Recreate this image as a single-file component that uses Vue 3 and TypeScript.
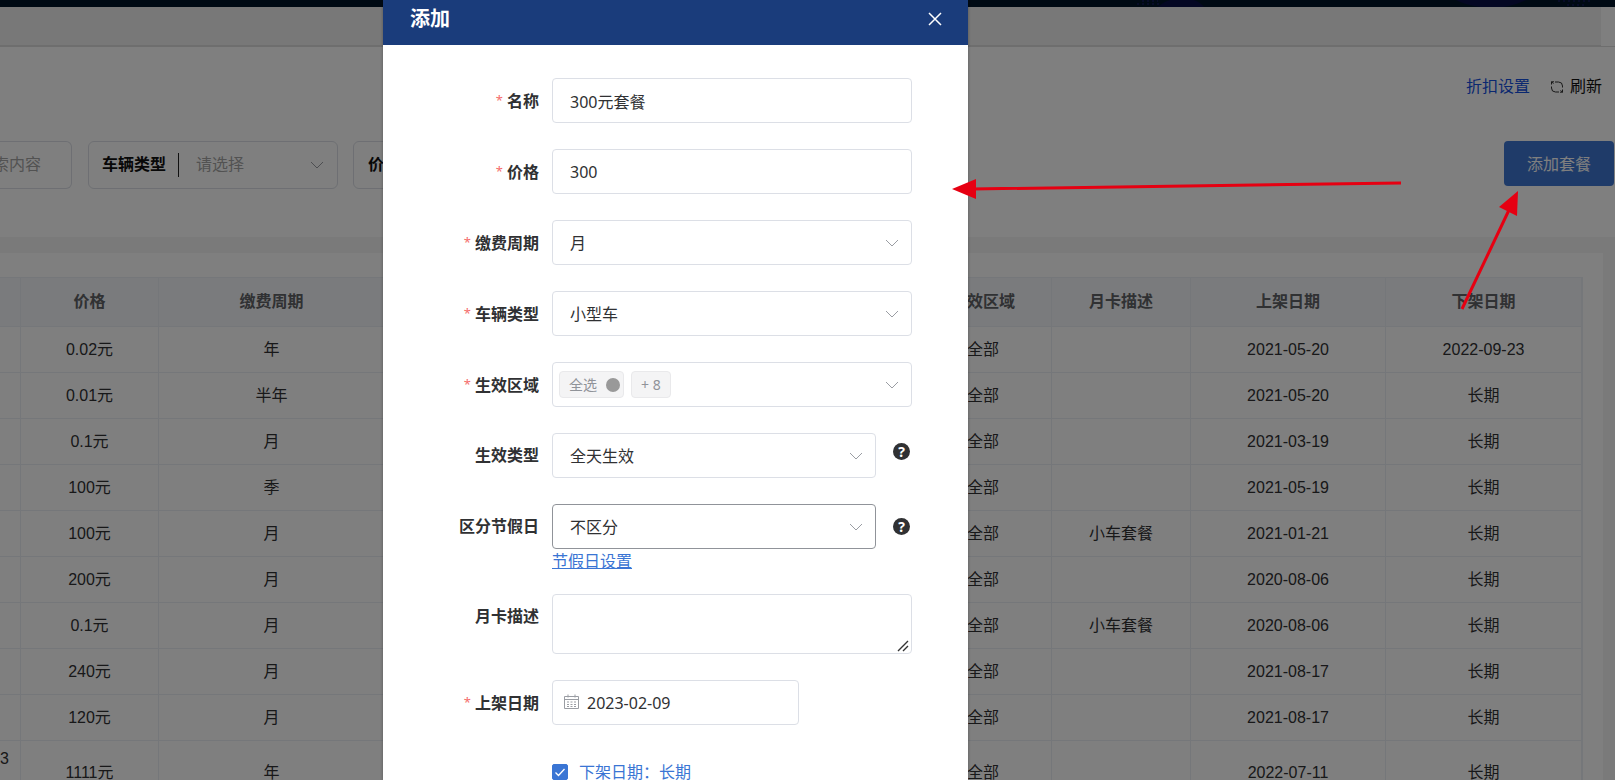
<script setup lang="ts">
import { reactive } from 'vue'

interface Plan {
  name: string
  price: string
  cycle: string
  area: string
  remark: string
  start: string
  end: string
}

const headers = ['', '价格', '缴费周期', '', '生效区域', '月卡描述', '上架日期', '下架日期']

const plan = (price: string, cycle: string, start: string, end = '长期', remark = '', name = ''): Plan => ({
  name,
  price,
  cycle,
  area: '全部',
  remark,
  start,
  end,
})

const plans: Plan[] = [
  plan('0.02元', '年', '2021-05-20', '2022-09-23'),
  plan('0.01元', '半年', '2021-05-20'),
  plan('0.1元', '月', '2021-03-19'),
  plan('100元', '季', '2021-05-19'),
  plan('100元', '月', '2021-01-21', '长期', '小车套餐'),
  plan('200元', '月', '2020-08-06'),
  plan('0.1元', '月', '2020-08-06', '长期', '小车套餐'),
  plan('240元', '月', '2021-08-17'),
  plan('120元', '月', '2021-08-17'),
  plan('1111元', '年', '2022-07-11', '长期', '', '3'),
]

const form = reactive({
  name: '300元套餐',
  price: '300',
  cycle: '月',
  carType: '小型车',
  effectType: '全天生效',
  holiday: '不区分',
  remark: '',
  startDate: '2023-02-09',
  longTerm: true,
})
</script>

<template>
  <div class="app">
    <div class="page">
      <header class="topbar">
        <svg class="topbar-art" viewBox="0 0 495 7" aria-hidden="true">
          <path d="M38 7Q43 2 50 0H74Q80 2 84 7Z" />
          <path d="M336 0H406Q396 5 384 7H360Q345 5 336 0Z" />
          <g class="dots">
            <path d="M22 1H38M17 4H40M438 1H472M447 5H464" />
          </g>
        </svg>
      </header>
      <nav class="tabs"><div class="tabs-track"></div></nav>

      <section class="tools">
        <div class="actions">
          <a class="discount" href="#">折扣设置</a>
          <button class="refresh" type="button">
            <svg viewBox="0 0 14 14" aria-hidden="true">
              <path d="M5 2H8.5A4 4 0 0 1 12.5 6V7.5M9 12H5.5A4 4 0 0 1 1.5 8V6.5M1.5 4.5V1.8H4M12.5 9.5V12.2H10M1.5 1.8L3.5 3.5M12.5 12.2L10.5 10.5" />
            </svg>
            刷新
          </button>
        </div>
        <div class="filters">
          <input class="filter search" type="text" placeholder="索内容" aria-label="索内容" />
          <div class="filter type-filter">
            <label for="filter-type">车辆类型</label>
            <select id="filter-type"><option>请选择</option></select>
            <svg class="chevron" viewBox="0 0 14 14" aria-hidden="true"><path d="M1 4L7 10L13 4" /></svg>
          </div>
          <div class="filter price-filter"><span>价</span></div>
          <button class="add" type="button">添加套餐</button>
        </div>
      </section>

      <section class="list">
        <table>
          <colgroup>
            <col class="c-name" /><col class="c-price" /><col class="c-cycle" /><col />
            <col class="c-area" /><col class="c-remark" /><col class="c-start" /><col class="c-end" />
          </colgroup>
          <thead>
            <tr><th v-for="(h, i) in headers" :key="i">{{ h }}</th></tr>
          </thead>
          <tbody>
            <tr v-for="(p, i) in plans" :key="i" :class="{ tall: p.name }">
              <td class="name">{{ p.name }}</td>
              <td>{{ p.price }}</td>
              <td>{{ p.cycle }}</td>
              <td></td>
              <td>{{ p.area }}</td>
              <td>{{ p.remark }}</td>
              <td>{{ p.start }}</td>
              <td>{{ p.end }}</td>
            </tr>
          </tbody>
        </table>
      </section>
    </div>

    <div class="overlay">
      <div class="dialog" role="dialog" aria-labelledby="dialog-title">
        <header class="dialog-head">
          <h2 id="dialog-title">添加</h2>
          <button type="button" aria-label="关闭">
            <svg viewBox="0 0 14 14" aria-hidden="true"><path d="M1 1L13 13M13 1L1 13" /></svg>
          </button>
        </header>

        <form class="form" @submit.prevent>
          <div class="row">
            <label class="required" for="f-name">名称</label>
            <input id="f-name" v-model="form.name" class="control" type="text" />
          </div>
          <div class="row">
            <label class="required" for="f-price">价格</label>
            <input id="f-price" v-model="form.price" class="control" type="text" />
          </div>
          <div class="row">
            <label class="required" for="f-cycle">缴费周期</label>
            <div class="select">
              <select id="f-cycle" v-model="form.cycle" class="control"><option>月</option></select>
              <svg class="chevron" viewBox="0 0 14 14" aria-hidden="true"><path d="M1 4L7 10L13 4" /></svg>
            </div>
          </div>
          <div class="row">
            <label class="required" for="f-car">车辆类型</label>
            <div class="select">
              <select id="f-car" v-model="form.carType" class="control"><option>小型车</option></select>
              <svg class="chevron" viewBox="0 0 14 14" aria-hidden="true"><path d="M1 4L7 10L13 4" /></svg>
            </div>
          </div>
          <div class="row">
            <label class="required" for="f-area">生效区域</label>
            <button id="f-area" type="button" class="control tags">
              <span class="tag">全选<i class="dot"></i></span>
              <span class="tag">+ 8</span>
              <svg class="chevron" viewBox="0 0 14 14" aria-hidden="true"><path d="M1 4L7 10L13 4" /></svg>
            </button>
          </div>
          <div class="row">
            <label for="f-effect">生效类型</label>
            <div class="select">
              <select id="f-effect" v-model="form.effectType" class="control"><option>全天生效</option></select>
              <svg class="chevron" viewBox="0 0 14 14" aria-hidden="true"><path d="M1 4L7 10L13 4" /></svg>
            </div>
            <span class="help">?</span>
          </div>
          <div class="row holiday">
            <label for="f-holiday">区分节假日</label>
            <div class="select">
              <select id="f-holiday" v-model="form.holiday" class="control hover"><option>不区分</option></select>
              <svg class="chevron" viewBox="0 0 14 14" aria-hidden="true"><path d="M1 4L7 10L13 4" /></svg>
            </div>
            <span class="help">?</span>
          </div>
          <a class="holiday-link" href="#">节假日设置</a>
          <div class="row">
            <label for="f-remark">月卡描述</label>
            <div class="area">
              <textarea id="f-remark" v-model="form.remark" class="control"></textarea>
              <svg class="grip" viewBox="0 0 12 12" aria-hidden="true"><path d="M1 11L11 1M6 11L11 6" /></svg>
            </div>
          </div>
          <div class="row">
            <label class="required" for="f-start">上架日期</label>
            <div class="date">
              <svg viewBox="0 0 15 15" aria-hidden="true">
                <path d="M.5 2.5H14.5V14.5H.5ZM.5 5.5H14.5M4 .5V3.5M11 .5V3.5M3 8H5M6.5 8H8.5M10 8H12M3 10.5H5M6.5 10.5H8.5M10 10.5H12M3 12.5H5M6.5 12.5H8.5M10 12.5H12" />
              </svg>
              <input id="f-start" v-model="form.startDate" class="control" type="text" />
            </div>
          </div>
          <label class="long-term">
            <span class="check">
              <input v-model="form.longTerm" type="checkbox" />
              <svg v-if="form.longTerm" viewBox="0 0 16 16" aria-hidden="true"><path d="M3.5 8.5L6.5 11.5L12.5 5" /></svg>
            </span>
            <span>下架日期：长期</span>
          </label>
        </form>
      </div>
    </div>

    <svg class="arrows" viewBox="0 0 1615 780" aria-hidden="true">
      <path class="line" d="M1401 183L972 189M1462 309L1509 210" />
      <path class="tip" d="M952 189L976 179V199Z" />
      <path class="tip" d="M1518 191L1517 216L1499 207Z" />
    </svg>
  </div>
</template>

<style>
body {
  margin: 0;
}
</style>

<style scoped>
* {
  box-sizing: border-box;
}

.app {
  position: relative;
  height: 100vh;
  overflow: hidden;
  font: 16px/24px "Noto Sans", "Noto Sans CJK SC", sans-serif;
  color: #303133;
}

input,
select,
textarea,
button {
  margin: 0;
  font: inherit;
  color: inherit;
}

select {
  appearance: none;
}

button {
  border: 0;
  padding: 0;
  background: none;
}

.page {
  min-height: 100%;
  background: #f5f5f5;
  font-family: "Liberation Sans", "Noto Sans CJK SC", sans-serif;
}

.topbar {
  display: flex;
  justify-content: flex-end;
  height: 7px;
  background: #001529;
}

.topbar-art {
  width: 495px;
  height: 7px;
  fill: #080e46;
}

.dots {
  stroke: #0e1850;
  stroke-width: 2;
  stroke-dasharray: 2 3;
}

.tabs {
  padding-right: 14px;
  border-bottom: 1px solid #dcdcdc;
  background: #fff;
}

.tabs-track {
  height: 39px;
  border-bottom: 1px solid #dcdcdc;
  background: #f0f0f0;
}

.tools {
  height: 190px;
  padding-top: 28px;
  background: #fff;
}

.actions {
  display: flex;
  justify-content: flex-end;
  align-items: center;
  gap: 20px;
  padding-right: 13px;
}

.discount {
  color: #1450e0;
  text-decoration: none;
}

.refresh {
  display: flex;
  align-items: center;
  gap: 6px;
  color: #111;
}

.refresh svg {
  width: 14px;
  height: 14px;
  fill: none;
  stroke: #333;
}

.filters {
  display: flex;
  align-items: flex-start;
  margin-top: 42px;
  padding-right: 1px;
}

.filter {
  display: flex;
  align-items: center;
  height: 48px;
  border: 1px solid #dcdfe6;
  border-radius: 6px;
  background: #fff;
}

.search {
  width: 72px;
  padding: 0;
  border-left: 0;
  border-radius: 0 6px 6px 0;
  text-indent: -7px;
  outline: none;
}

.search::placeholder {
  color: #a4a4a4;
}

.type-filter {
  width: 250px;
  margin-left: 16px;
  padding: 0 13px;
}

.type-filter label {
  padding-right: 12px;
  border-right: 1px solid #222;
  font-weight: 700;
  color: #111;
}

.type-filter select {
  flex: 1;
  min-width: 0;
  padding: 0 0 0 17px;
  border: 0;
  background: none;
  color: #a4a4a4;
}

.price-filter {
  width: 250px;
  margin-left: 15px;
  padding: 0 14px;
  font-weight: 700;
  color: #111;
}

.chevron {
  flex: none;
  width: 14px;
  height: 14px;
  fill: none;
  stroke: #9a9da3;
}

.add {
  width: 110px;
  height: 45px;
  margin-left: auto;
  padding-top: 2px;
  border-radius: 4px;
  background: #3e76d2;
  color: #fff;
}

.list {
  margin: 16px 12px 0 0;
  padding: 24px 20px 24px 0;
  background: #fff;
}

table {
  width: 100%;
  table-layout: fixed;
  border-spacing: 0;
  border-top: 1px solid #ebeef5;
  border-right: 1px solid #ebeef5;
}

.c-name {
  width: 21px;
}

.c-price {
  width: 138px;
}

.c-cycle {
  width: 226px;
}

.c-area {
  width: 137px;
}

.c-remark {
  width: 139px;
}

.c-start {
  width: 195px;
}

.c-end {
  width: 196px;
}

th,
td {
  height: 46px;
  padding: 0;
  border-right: 1px solid #ebeef5;
  border-bottom: 1px solid #ebeef5;
  text-align: center;
}

th {
  height: 49px;
  background: #f5f7fa;
  color: #606266;
}

.tall td {
  height: 64px;
}

.tall .name {
  padding: 6px 15px 0 0;
  text-align: right;
  vertical-align: top;
}

.overlay {
  position: absolute;
  inset: 0;
  display: flex;
  justify-content: center;
  padding-right: 264px;
  background: rgba(0, 0, 0, 0.5);
}

.dialog {
  width: 585px;
  background: #fff;
  box-shadow: 0 1px 3px rgba(0, 0, 0, 0.3);
}

.dialog-head {
  display: flex;
  justify-content: space-between;
  align-items: center;
  height: 45px;
  padding: 0 26px 8px 27px;
  background: #1a3c7b;
  color: #fff;
}

.dialog-head h2 {
  margin: 0;
  font-size: 20px;
}

.dialog-head svg {
  display: block;
  width: 14px;
  height: 14px;
  stroke: #fff;
  stroke-width: 1.5;
}

.form {
  display: flex;
  flex-direction: column;
  gap: 26px;
  padding: 33px 56px 0 0;
}

.row {
  display: flex;
}

.row > label {
  flex: none;
  width: 169px;
  padding: 10px 13px 0 0;
  text-align: right;
  font-weight: 700;
}

.required::before {
  content: "*";
  margin-right: 4px;
  font-size: 13px;
  font-weight: 400;
  vertical-align: 2px;
  color: #f56c6c;
}

.control {
  display: block;
  flex: 1;
  width: 100%;
  min-width: 0;
  height: 45px;
  padding: 0 17px;
  border: 1px solid #dcdfe6;
  border-radius: 4px;
  background: #fff;
  outline: none;
}

.hover {
  border-color: #909399;
}

.select {
  position: relative;
  flex: 1;
}

.select .chevron {
  position: absolute;
  top: 16px;
  right: 13px;
}

.tags {
  display: flex;
  align-items: center;
  gap: 7px;
  padding: 0 12px 0 6px;
}

.tags .chevron {
  margin-left: auto;
}

.tag {
  display: flex;
  align-items: center;
  gap: 9px;
  height: 27px;
  padding: 0 9px;
  border: 1px solid #e9e9eb;
  border-radius: 4px;
  background: #f4f4f5;
  font-size: 14px;
  color: #909399;
}

.dot {
  width: 14px;
  height: 14px;
  margin-right: -6px;
  border-radius: 50%;
  background: #999;
}

.help {
  width: 17px;
  height: 17px;
  margin: 10px 2px 0 17px;
  border-radius: 50%;
  background: #303133;
  color: #fff;
  font-size: 14px;
  font-weight: 700;
  line-height: 17px;
  text-align: center;
}

.holiday .help {
  margin-top: 14px;
}

.holiday-link {
  align-self: flex-start;
  margin: -26px 0 -5px 169px;
  color: #3a75d4;
}

.area {
  position: relative;
  flex: 1;
}

.area textarea {
  height: 60px;
  resize: none;
}

.grip {
  position: absolute;
  right: 3px;
  bottom: 2px;
  width: 12px;
  height: 12px;
  stroke: #333;
  stroke-width: 1.4;
}

.date {
  position: relative;
  width: 247px;
}

.date svg {
  position: absolute;
  top: 14px;
  left: 12px;
  width: 15px;
  height: 15px;
  fill: none;
  stroke: #9a9da3;
}

.date .control {
  padding-left: 34px;
}

.long-term {
  display: flex;
  align-items: center;
  gap: 11px;
  margin: 9px 0 0 169px;
  color: #3a75d4;
}

.check {
  position: relative;
  flex: none;
  width: 16px;
  height: 16px;
}

.check input {
  display: block;
  width: 16px;
  height: 16px;
  appearance: none;
  border: 1px solid #3a75d4;
  border-radius: 2px;
}

.check input:checked {
  background: #3a75d4;
}

.check svg {
  position: absolute;
  inset: 0;
  fill: none;
  stroke: #fff;
  stroke-width: 1.3;
  pointer-events: none;
}

.arrows {
  position: absolute;
  inset: 0;
  width: 100%;
  height: 100%;
  pointer-events: none;
}

.line {
  fill: none;
  stroke: #e60012;
  stroke-width: 3;
}

.tip {
  fill: #e60012;
}
</style>
